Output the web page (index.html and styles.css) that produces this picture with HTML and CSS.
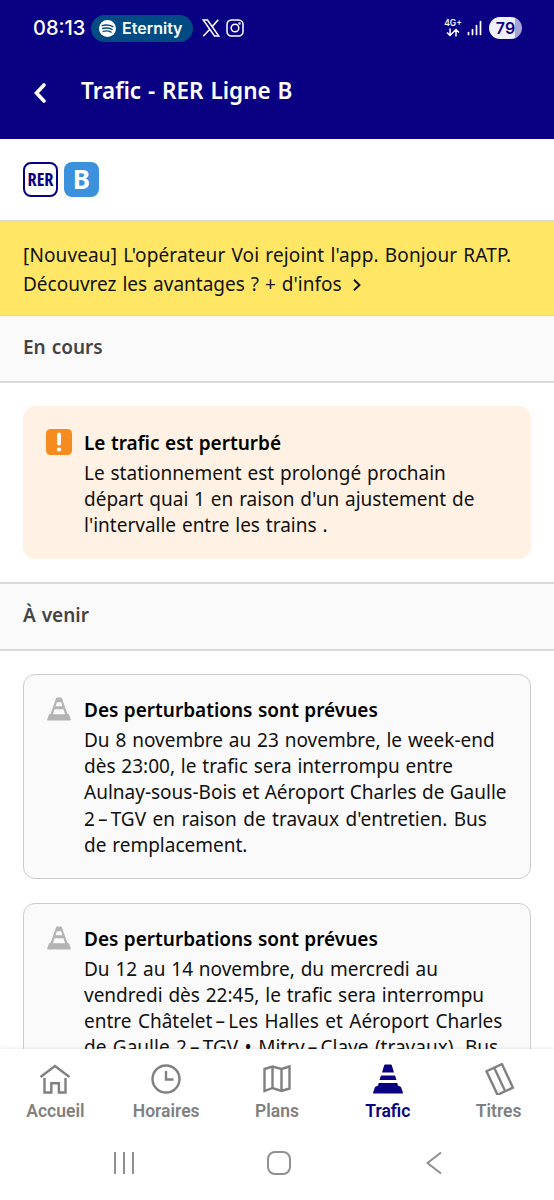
FILE: index.html
```
<!DOCTYPE html>
<html lang="fr">
<head>
    <meta charset="UTF-8">
    <meta name="viewport" content="width=device-width, initial-scale=1.0">
    <title>Trafic - RER Ligne B</title>
    <link rel="stylesheet" href="styles.css">
</head>
<body>
    <svg width="0" height="0" class="defs">
        <symbol id="cone" viewBox="0 0 30 30">
            <path d="M12.300 .5h5.400q.8 0 1.100.8L21 8.500H9L11.200 1.300q.3-.8 1.100-.8zM8 11.500h14l1.500 4.500H6.500zM5.800 19h18.400l1 2.800 2 .8q.7.3 1 1l1.700 4.900q.3 1-.8 1H.9q-1.100 0-.8-1l1.700-4.900q.3-.7 1-1l2-.8z"/>
        </symbol>
        <symbol id="cone-small" viewBox="0 0 24 24">
            <path fill-rule="evenodd" d="M10 .5h4q.6 0 .8.6L20.500 17l1.600.6 1.700 4.900q.2 1-.7 1H.9q-.9 0-.7-1l1.700-4.900 1.600-.6L9.200 1.100Q9.400.5 10 .5zM9.800 5.200L8.600 9.300h6.800l-1.200-4.100zM7.500 12.300l-1.500 5h12l-1.500-5z"/>
        </symbol>
    </svg>
    <div class="app">
        <header class="header">
            <div class="status">
                <span class="time">08:13</span>
                <span class="pill">
                    <svg class="spotify" viewBox="0 0 18 18">
                        <circle cx="9" cy="9" r="9" fill="#fff"/>
                        <path d="M3.300 5.900q6-1.700 11.500 1M3.900 9q5-1.400 9.900.9M4.500 12q4.300-1.200 8.300.8" fill="none" stroke="#004b84" stroke-width="1.500" stroke-linecap="round"/>
                    </svg>
                    <span class="song">Eternity</span>
                </span>
                <svg class="x" viewBox="0 0 18 18" fill="none" stroke="#fff">
                    <path d="M1.200 1h4.300l11.300 16h-4.300z" stroke-width="1.500"/>
                    <path d="M16.200 .8L10 7.900M7.800 10.300L1.200 17.300" stroke-width="1.600"/>
                </svg>
                <svg class="insta" viewBox="0 0 18 18" fill="none" stroke="#fff" stroke-width="1.500">
                    <rect x="1" y="1" width="16" height="16" rx="4.500"/>
                    <circle cx="9" cy="9" r="3.800"/>
                    <circle cx="13.500" cy="4.500" r=".5"/>
                </svg>
                <span class="network">
                    <span class="network-type">4G+</span>
                    <svg width="14" height="9" viewBox="0 0 14 9" fill="none" stroke="#fff" stroke-width="1.500">
                        <path d="M4 .5v7M1 4.500l3 3 3-3M10 8.500v-7M7 4.500l3-3 3 3"/>
                    </svg>
                </span>
                <svg class="signal" viewBox="0 0 15 16" stroke="#fff" stroke-width="1.700" stroke-linecap="round">
                    <path d="M1.500 12.500v2M5.500 9.500v5M9.500 5.500v9M13.500 1.500v13"/>
                </svg>
                <span class="battery">79</span>
            </div>
            <div class="title-bar">
                <svg class="back" viewBox="0 0 14 22" fill="none" stroke="#fff" stroke-width="3.600" stroke-linecap="round">
                    <path d="M11 3L3.500 11l7.500 8"/>
                </svg>
                <h1>Trafic - RER Ligne B</h1>
            </div>
        </header>

        <main class="content">
            <div class="line">
                <span class="rer">RER</span>
                <span class="line-b">B</span>
            </div>
            <a class="banner">
                <span class="wide">[Nouveau] L'opérateur Voi rejoint l'app. Bonjour RATP.</span><br>
                <span>Découvrez les avantages ? + d'infos</span>
                <svg class="more" viewBox="0 0 8 12" fill="none" stroke="#111" stroke-width="1.900">
                    <path d="M1 .8L6.500 6 1 11.200"/>
                </svg>
            </a>
            <h2 class="section">En cours</h2>
            <div class="cards">
                <div class="card alert">
                    <svg class="icon" viewBox="0 0 26 26">
                        <rect width="26" height="26" rx="4.500" fill="#f68b1f"/>
                        <path d="M13 5.500v9" stroke="#fff" stroke-width="4" stroke-linecap="round"/>
                        <circle cx="13" cy="20.500" r="2.100" fill="#fff"/>
                    </svg>
                    <div class="text">
                        <h3>Le trafic est perturbé</h3>
                        <p>Le stationnement est prolongé prochain<br>départ quai 1 en raison d'un ajustement de<br>l'intervalle entre les trains .</p>
                    </div>
                </div>
            </div>
            <h2 class="section">À venir</h2>
            <div class="cards">
                <div class="card">
                    <svg class="icon cone"><use href="#cone-small"/></svg>
                    <div class="text">
                        <h3>Des perturbations sont prévues</h3>
                        <p>Du 8 novembre au 23 novembre, le week-end<br>dès 23:00, le trafic sera interrompu entre<br><span class="tight">Aulnay-sous-Bois et Aéroport Charles de Gaulle</span><br><span class="loose">2&#8201;–&#8201;TGV en raison de travaux d'entretien. Bus</span><br>de remplacement.</p>
                    </div>
                </div>
                <div class="card">
                    <svg class="icon cone"><use href="#cone-small"/></svg>
                    <div class="text">
                        <h3>Des perturbations sont prévues</h3>
                        <p>Du 12 au 14 novembre, du mercredi au<br>vendredi dès 22:45, le trafic sera interrompu<br><span class="loose">entre Châtelet&#8201;–&#8201;Les Halles et Aéroport Charles</span><br><span class="loose">de Gaulle 2&#8201;–&#8201;TGV • Mitry&#8201;–&#8201;Claye (travaux). Bus</span></p>
                    </div>
                </div>
            </div>
        </main>

        <footer class="footer">
            <nav class="tabs">
                <a class="tab">
                    <svg viewBox="0 0 32 32">
                        <path d="M1.500 14L16 3l14.500 11M5.500 15v14.500h6.800v-9.300h7.600v9.300h6.600V15"/>
                    </svg>
                    Accueil
                </a>
                <a class="tab">
                    <svg viewBox="0 0 32 32">
                        <circle cx="16" cy="16" r="13.500"/>
                        <path d="M16 8v8.500h7.500"/>
                    </svg>
                    Horaires
                </a>
                <a class="tab">
                    <svg viewBox="0 0 32 32">
                        <path d="M3.500 6l8-2.500 9 2.500 8-2.500V25.500l-8 2.500-9-3-8 3zM11.500 3.500V25M20.500 6v22"/>
                    </svg>
                    Plans
                </a>
                <a class="tab active">
                    <svg viewBox="0 0 32 32"><use href="#cone" x="1" y="1" width="30" height="30"/></svg>
                    Trafic
                </a>
                <a class="tab">
                    <svg viewBox="0 0 32 32">
                        <g transform="rotate(-25 16.500 16)">
                            <path d="M8 3.500h17v26H8zM16.500 3.500v26"/>
                        </g>
                    </svg>
                    Titres
                </a>
            </nav>
            <div class="android">
                <svg viewBox="0 0 24 24"><path d="M3 1v22M12 1v22M21 1v22"/></svg>
                <svg viewBox="0 0 24 24"><rect x="1" y="1" width="22" height="22" rx="7"/></svg>
                <svg viewBox="0 0 24 24"><path d="M19 1.500L5.500 12 19 22.500"/></svg>
            </div>
        </footer>
    </div>
</body>
</html>
```
FILE: styles.css
```
* {
    box-sizing: border-box;
}
body {
    margin: 0;
    font-family: "Noto Sans", sans-serif;
    color: #111;
    background: #fff;
}
h1, h2, h3, p {
    margin: 0;
}
.defs {
    display: block;
}
.app {
    height: 1200px;
    display: flex;
    flex-direction: column;
    overflow: hidden;
}
.header {
    height: 139px;
    flex: none;
    background: #0a0082;
    color: #fff;
}
.status {
    display: flex;
    align-items: center;
    height: 56px;
    padding: 0 32px 0 33px;
    font-family: Inter, sans-serif;
}
.time {
    width: 58px;
    font-size: 20px;
    font-weight: 500;
}
.pill {
    display: flex;
    align-items: center;
    gap: 6px;
    width: 102px;
    height: 27px;
    padding-left: 8px;
    border-radius: 14px;
    background: #004b84;
}
.spotify {
    width: 17px;
    height: 17px;
}
.song {
    font-size: 16px;
    font-weight: 600;
}
.x {
    width: 18px;
    height: 18px;
    margin-left: 9px;
}
.insta {
    width: 18px;
    height: 18px;
    margin-left: 6px;
}
.network {
    display: flex;
    flex-direction: column;
    align-items: center;
    width: 18px;
    margin-left: auto;
}
.network-type {
    font-size: 8.5px;
    font-weight: 600;
    line-height: 9px;
}
.signal {
    width: 15px;
    height: 16px;
    margin: 0 7px 0 5px;
}
.battery {
    width: 33px;
    height: 22px;
    border-radius: 11px;
    background: linear-gradient(90deg, #f0f0fb 79%, #a8a3d6 79%);
    color: #0a0082;
    font-size: 16px;
    font-weight: 600;
    line-height: 22px;
    text-align: center;
}
.title-bar {
    display: flex;
    align-items: center;
    height: 70px;
    padding-left: 33px;
}
.back {
    width: 14px;
    height: 22px;
    margin: 3px 34px 0 0;
}
.title-bar h1 {
    font-size: 22.5px;
    font-weight: 600;
    line-height: 30px;
    word-spacing: 1px;
}
.content {
    flex: 1;
    min-height: 0;
    overflow: hidden;
}
.line {
    display: flex;
    gap: 6px;
    height: 81px;
    padding: 23px;
}
.rer, .line-b {
    width: 35px;
    height: 35px;
    border-radius: 8px;
    font-weight: 700;
    text-align: center;
}
.rer {
    display: flex;
    justify-content: center;
    border: 2px solid #0a0082;
    color: #0a0082;
    font-family: "Open Sans", sans-serif;
    font-stretch: 75%;
    font-size: 18px;
    line-height: 31px;
}
.line-b {
    background: #3c91dc;
    color: #fff;
    font-size: 26px;
    line-height: 34px;
}
.banner {
    display: block;
    height: 96px;
    padding: 19px 23px 16px;
    border-top: 2px solid #dcdccc;
    border-bottom: 1px solid #d8d5c4;
    background: #ffe765;
    font-size: 19px;
    line-height: 29px;
    white-space: nowrap;
    word-spacing: 1px;
}
.wide {
    letter-spacing: 0.13px;
}
.more {
    width: 8px;
    height: 12px;
    margin-left: 6px;
}
.section {
    height: 67px;
    padding-left: 23px;
    border-bottom: 2px solid #d9d9d9;
    background: #fafafa;
    color: #444;
    font-size: 19px;
    font-weight: 600;
    line-height: 63px;
    word-spacing: 1px;
}
.cards + .section {
    height: 69px;
    border-top: 2px solid #d9d9d9;
}
.cards {
    display: flex;
    flex-direction: column;
    gap: 24px;
    padding: 23px;
}
.card {
    display: flex;
    padding: 21px 0 20px 22px;
    border: 1px solid #cbcbcb;
    border-radius: 12px;
    background: #fafafa;
    white-space: nowrap;
}
.alert {
    padding-top: 22px;
    border-color: #fff1e3;
    background: #fff1e3;
}
.icon {
    flex: none;
    width: 26px;
    height: 26px;
    margin-right: 12px;
}
.cone {
    width: 24px;
    height: 24px;
    margin: 1px 13px 0 1px;
    fill: #b4b4b4;
}
.text h3 {
    color: #000;
    font-size: 19px;
    font-weight: 600;
    line-height: 32px;
    margin-top: -2px;
    word-spacing: 0.5px;
}
.text p {
    margin-top: 1px;
    font-size: 19px;
    line-height: 26.1px;
    word-spacing: 0.9px;
}
.text .tight {
    word-spacing: 0.4px;
}
.text .loose {
    word-spacing: 1.5px;
}
.footer {
    position: relative;
    height: 151px;
    flex: none;
    background: #fff;
    box-shadow: 0 -1px 3px rgba(0, 0, 0, 0.08);
}
.tabs {
    display: flex;
    padding-top: 14px;
}
.tab {
    flex: 1;
    display: flex;
    flex-direction: column;
    align-items: center;
    gap: 6px;
    color: #808080;
    font-family: Roboto, sans-serif;
    font-size: 17.5px;
    font-weight: 600;
    line-height: 20px;
}
.tab svg {
    width: 32px;
    height: 32px;
    fill: none;
    stroke: #808080;
    stroke-width: 2.4;
}
.active {
    color: #0a0082;
}
.tab.active svg {
    fill: #0a0082;
    stroke: none;
}
.android {
    display: flex;
    justify-content: space-between;
    padding: 30px 108px 0 112px;
}
.android svg {
    width: 24px;
    height: 24px;
    fill: none;
    stroke: #909090;
    stroke-width: 2;
}
```
